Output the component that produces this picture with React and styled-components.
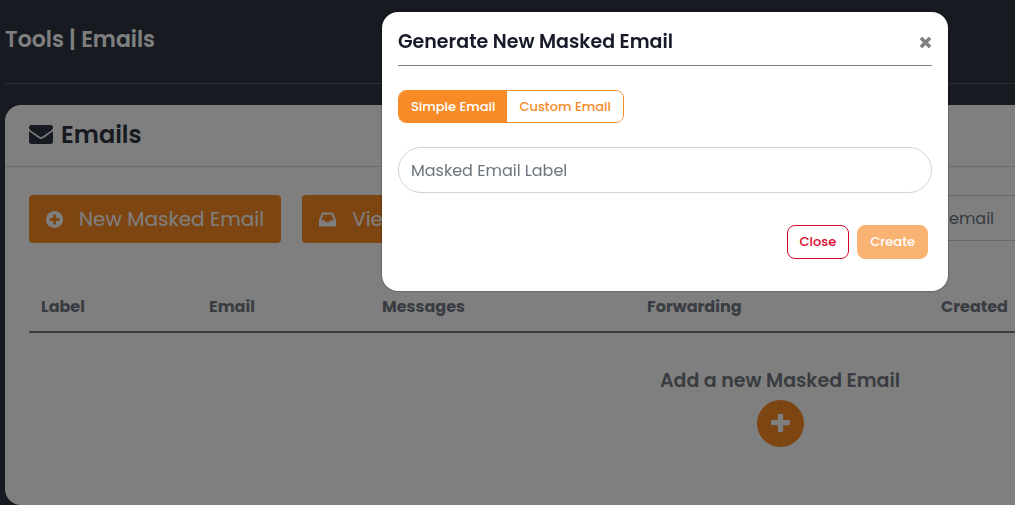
import { useState } from "react";
import styled, { createGlobalStyle } from "styled-components";

const GlobalStyle = createGlobalStyle`
  * {
    box-sizing: border-box;
  }

  body {
    margin: 0;
    overflow: hidden;
    background-color: #2f3442;
    font-family: Poppins, Inter, sans-serif;
    font-size: 16px;
  }

  button,
  input {
    font-family: inherit;
  }
`;

const Page = styled.main`
  min-width: 1560px;
  padding: 0 5px;
`;

const PageHeader = styled.header`
  height: 84px;
  display: flex;
  align-items: center;
  padding-bottom: 4px;
  margin-bottom: 21px;
  border-bottom: 1px solid #565a5e;
`;

const PageTitle = styled.h1`
  margin: 0;
  color: white;
  font-size: 22px;
  font-weight: 600;
`;

const Card = styled.section`
  min-height: 400px;
  border-radius: 16px;
  background-color: white;
`;

const CardHeader = styled.div`
  height: 62px;
  display: flex;
  align-items: center;
  gap: 8px;
  padding: 0 24px 2px;
  border-bottom: 1px solid #cfd8dc;
  color: #2f3442;
`;

const CardTitle = styled.h2`
  margin: 0;
  font-size: 24px;
  font-weight: 600;
`;

const CardBody = styled.div`
  padding: 28px 24px;
`;

const Toolbar = styled.div`
  display: flex;
  align-items: flex-start;
  gap: 21px;
  margin-bottom: 36px;
`;

const ToolButton = styled.button`
  height: 48px;
  display: flex;
  align-items: center;
  gap: 16px;
  padding: 0 17px;
  border: none;
  border-radius: 4px;
  background-color: #f88a25;
  color: white;
  font-size: 20px;
  cursor: pointer;
`;

const TextInput = styled.input`
  width: 100%;
  height: 46px;
  display: block;
  padding: 0 12px;
  border: 1px solid #ced4da;
  border-radius: 23px;
  font-size: 16px;

  &::placeholder {
    color: #6c757d;
    opacity: 1;
  }
`;

const SearchInput = styled(TextInput)`
  width: 360px;
  margin-left: 291px;
`;

const Table = styled.table`
  width: 100%;
  table-layout: fixed;
  border-collapse: collapse;
  color: #727a84;
`;

const HeadCell = styled.th`
  width: ${(props) => props.$width};
  height: 53px;
  padding: 2px 12px 0;
  border-bottom: 2px solid #7c7884;
  font-size: 16px;
  font-weight: 700;
  text-align: left;
`;

const EmptyCell = styled.td`
  padding: 36px 0 0;
  text-align: center;
`;

const EmptyTitle = styled.h3`
  margin: 0 0 7px;
  font-size: 19px;
  font-weight: 600;
  line-height: 24px;
`;

const RoundButton = styled.button`
  width: 47px;
  height: 47px;
  display: inline-flex;
  align-items: center;
  justify-content: center;
  padding: 0;
  border: none;
  border-radius: 50%;
  background-color: #f88a25;
  color: white;
  cursor: pointer;
`;

const Overlay = styled.div`
  position: fixed;
  inset: 0;
  display: flex;
  align-items: flex-start;
  justify-content: flex-end;
  padding: 12px 67px;
  background-color: rgba(0, 0, 0, 0.5);
`;

const Dialog = styled.div`
  width: 100%;
  max-width: 566px;
  padding: 0 16px 32px;
  border-radius: 16px;
  background-color: white;
  box-shadow: 0 0 2px rgba(0, 0, 0, 0.6);
`;

const DialogHeader = styled.div`
  height: 54px;
  display: flex;
  align-items: center;
  justify-content: space-between;
  padding-top: 6px;
  margin-bottom: 24px;
  border-bottom: 1px solid #808080;
`;

const DialogTitle = styled.h2`
  margin: 0;
  color: #171a28;
  font-size: 19px;
  font-weight: 600;
`;

const IconButton = styled.button`
  display: flex;
  padding: 2px 1px 0;
  border: none;
  background: none;
  color: #808080;
  cursor: pointer;
`;

const Tabs = styled.div`
  width: fit-content;
  display: flex;
  margin-bottom: 24px;
  border: 1px solid #f68b28;
  border-radius: 8px;
  overflow: hidden;
`;

const Tab = styled.button`
  height: 31px;
  padding: 0 12px;
  border: none;
  background-color: ${(props) => (props.$active ? "#f68b28" : "white")};
  color: ${(props) => (props.$active ? "white" : "#f68b28")};
  font-size: 13px;
  font-weight: 500;
  cursor: pointer;
`;

const DialogFooter = styled.div`
  display: flex;
  justify-content: flex-end;
  gap: 8px;
  padding: 32px 4px 0;
`;

const FooterButton = styled.button`
  height: 34px;
  padding: 0 12px;
  border: 1px solid ${(props) => (props.$primary ? "#f68b28" : "#d9042b")};
  border-radius: 8px;
  background-color: ${(props) => (props.$primary ? "#f68b28" : "white")};
  color: ${(props) => (props.$primary ? "white" : "#d9042b")};
  font-size: 13px;
  font-weight: 500;
  cursor: pointer;

  &:disabled {
    opacity: 0.65;
    cursor: not-allowed;
  }
`;

const EnvelopeIcon = () => (
  <svg width="24" height="19" viewBox="0 256 1792 1408" fill="currentColor">
    <path d="M1792 710v794q0 66-47 113t-113 47h-1472q-66 0-113-47t-47-113v-794q44 49 101 87 362 246 497 345 57 42 92.5 65.5t94.5 48 110 24.5h2q51 0 110-24.5t94.5-48 92.5-65.5q170-123 498-345 57-39 100-87zm0-294q0 79-49 151t-122 123q-376 261-468 325-10 7-42.5 31t-54 38.5-52 32.5-57.5 27-50 9h-2q-23 0-50-9t-57.5-27-52-32.5-54-38.5-42.5-31q-91-64-262-182.5t-205-142.5q-62-42-117-115.5t-55-136.5q0-78 41.5-130t118.5-52h1472q65 0 112.5 47t47.5 113z" />
  </svg>
);

const PlusCircleIcon = () => (
  <svg width="17" height="17" viewBox="128 128 1536 1536" fill="currentColor">
    <path d="M1344 960v-128q0-26-19-45t-45-19h-256v-256q0-26-19-45t-45-19h-128q-26 0-45 19t-19 45v256h-256q-26 0-45 19t-19 45v128q0 26 19 45t45 19h256v256q0 26 19 45t45 19h128q26 0 45-19t19-45v-256h256q26 0 45-19t19-45zm320-64q0 209-103 385.5t-279.5 279.5-385.5 103-385.5-103-279.5-279.5-103-385.5 103-385.5 279.5-279.5 385.5-103 385.5 103 279.5 279.5 103 385.5z" />
  </svg>
);

const InboxIcon = () => (
  <svg width="17" height="17" viewBox="128 128 1536 1536" fill="currentColor">
    <path d="M1151 960h316q-1-3-2.5-8t-2.5-8l-212-496h-708l-212 496q-1 2-2.5 8t-2.5 8h316l95 192h320zm513 30v482q0 26-19 45t-45 19h-1408q-26 0-45-19t-19-45v-482q0-62 25-123l238-552q10-25 36.5-42t52.5-17h832q26 0 52.5 17t36.5 42l238 552q25 61 25 123z" />
  </svg>
);

const PlusIcon = () => (
  <svg width="19" height="19" viewBox="192 192 1408 1408" fill="currentColor">
    <path d="M1600 736v192q0 40-28 68t-68 28h-416v416q0 40-28 68t-68 28h-192q-40 0-68-28t-28-68v-416h-416q-40 0-68-28t-28-68v-192q0-40 28-68t68-28h416v-416q0-40 28-68t68-28h192q40 0 68 28t28 68v416h416q40 0 68 28t28 68z" />
  </svg>
);

const TimesIcon = () => (
  <svg width="11" height="11" viewBox="302 366 1188 1188" fill="currentColor">
    <path d="M1490 1322q0 40-28 68l-136 136q-28 28-68 28t-68-28l-294-294-294 294q-28 28-68 28t-68-28l-136-136q-28-28-28-68t28-68l294-294-294-294q-28-28-28-68t28-68l136-136q28-28 68-28t68 28l294 294 294-294q28-28 68-28t68 28l136 136q28 28 28 68t-28 68l-294 294 294 294q28 28 28 68z" />
  </svg>
);

const columns = [
  { name: "Label", width: "168px" },
  { name: "Email", width: "173px" },
  { name: "Messages", width: "265px" },
  { name: "Forwarding", width: "294px" },
  { name: "Created", width: "auto" },
];

const App = () => {
  const [open, setOpen] = useState(true);
  const [mode, setMode] = useState("simple");
  const [label, setLabel] = useState("");

  return (
    <>
      <GlobalStyle />
      <Page>
        <PageHeader>
          <PageTitle>Tools | Emails</PageTitle>
        </PageHeader>
        <Card>
          <CardHeader>
            <EnvelopeIcon />
            <CardTitle>Emails</CardTitle>
          </CardHeader>
          <CardBody>
            <Toolbar>
              <ToolButton onClick={() => setOpen(true)}>
                <PlusCircleIcon />
                New Masked Email
              </ToolButton>
              <ToolButton>
                <InboxIcon />
                View Inbox
              </ToolButton>
              <SearchInput
                aria-label="Search"
                placeholder="Search by label or email"
              />
            </Toolbar>
            <Table>
              <thead>
                <tr>
                  {columns.map((column) => (
                    <HeadCell key={column.name} $width={column.width}>
                      {column.name}
                    </HeadCell>
                  ))}
                </tr>
              </thead>
              <tbody>
                <tr>
                  <EmptyCell colSpan={columns.length}>
                    <EmptyTitle>Add a new Masked Email</EmptyTitle>
                    <RoundButton
                      aria-label="Add a new Masked Email"
                      onClick={() => setOpen(true)}
                    >
                      <PlusIcon />
                    </RoundButton>
                  </EmptyCell>
                </tr>
              </tbody>
            </Table>
          </CardBody>
        </Card>
      </Page>

      {open && (
        <Overlay>
          <Dialog role="dialog" aria-modal="true" aria-labelledby="dialog-title">
            <DialogHeader>
              <DialogTitle id="dialog-title">
                Generate New Masked Email
              </DialogTitle>
              <IconButton aria-label="Close" onClick={() => setOpen(false)}>
                <TimesIcon />
              </IconButton>
            </DialogHeader>
            <Tabs>
              <Tab
                $active={mode === "simple"}
                onClick={() => setMode("simple")}
              >
                Simple Email
              </Tab>
              <Tab
                $active={mode === "custom"}
                onClick={() => setMode("custom")}
              >
                Custom Email
              </Tab>
            </Tabs>
            <TextInput
              aria-label="Masked Email Label"
              placeholder="Masked Email Label"
              value={label}
              onChange={(e) => setLabel(e.target.value)}
            />
            <DialogFooter>
              <FooterButton onClick={() => setOpen(false)}>Close</FooterButton>
              <FooterButton $primary disabled={!label}>
                Create
              </FooterButton>
            </DialogFooter>
          </Dialog>
        </Overlay>
      )}
    </>
  );
};

export default App;
